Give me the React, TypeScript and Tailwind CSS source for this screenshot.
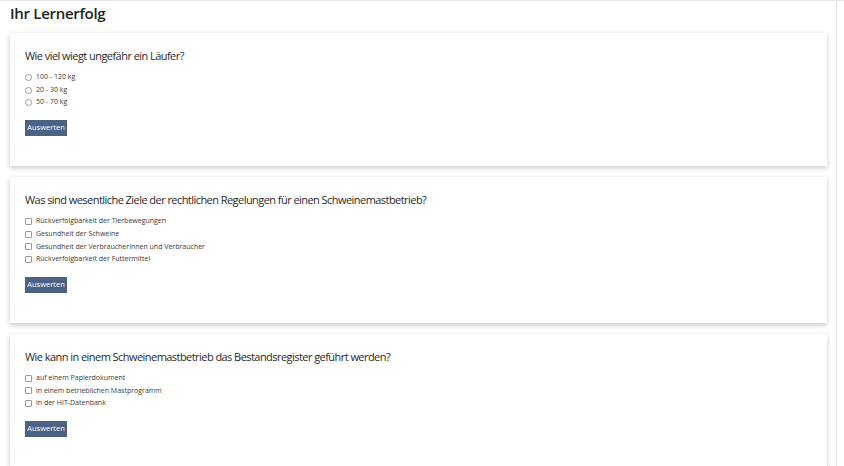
import React from "react";

const font = { fontFamily: '"Open Sans", "Noto Sans", sans-serif' };

function Radio() {
  return <span className="inline-block w-[7px] h-[7px] rounded-full border border-[#9a9a9a] bg-white shrink-0" />;
}
function Check() {
  return <span className="inline-block w-[7px] h-[7px] rounded-[1px] border border-[#9a9a9a] bg-white shrink-0" />;
}

function Card({ q, opts, type }: { q: string; opts: string[]; type: "radio" | "check" }) {
  return (
    <div className="bg-white shadow-[0_2px_5px_rgba(0,0,0,0.22)] px-[15px] pt-[14px] pb-[30px]">
      <div className="text-[11px] leading-[18px] tracking-[-0.55px] text-[#2a2a2a]">{q}</div>
      <div className="mt-[6px] flex flex-col">
        {opts.map((o) => (
          <div key={o} className="flex items-center gap-[4px] h-[12.7px] text-[7px] text-[#3a3a3a]">
            {type === "radio" ? <Radio /> : <Check />}
            <span>{o}</span>
          </div>
        ))}
      </div>
      <button className="mt-[11px] h-[16px] w-[42px] bg-[#4b6286] text-white text-[7.5px] flex items-center justify-center">
        Auswerten
      </button>
    </div>
  );
}

export default function App() {
  return (
    <div style={font} className="w-[844px] h-[466px] overflow-hidden bg-white border-t border-[#e6e6e6] flex">
      <div className="flex-1 pl-[10px] pr-[9px]">
        <h1 className="text-[15px] leading-[20px] tracking-[-0.3px] font-semibold text-[#222] mt-[2px]">Ihr Lernerfolg</h1>
        <div className="mt-[10px] flex flex-col gap-[11px]">
          <Card type="radio" q="Wie viel wiegt ungefähr ein Läufer?" opts={["100 - 120 kg", "20 - 30 kg", "50 - 70 kg"]} />
          <Card
            type="check"
            q="Was sind wesentliche Ziele der rechtlichen Regelungen für einen Schweinemastbetrieb?"
            opts={[
              "Rückverfolgbarkeit der Tierbewegungen",
              "Gesundheit der Schweine",
              "Gesundheit der Verbraucherinnen und Verbraucher",
              "Rückverfolgbarkeit der Futtermittel",
            ]}
          />
          <Card
            type="check"
            q="Wie kann in einem Schweinemastbetrieb das Bestandsregister geführt werden?"
            opts={["auf einem Papierdokument", "in einem betrieblichen Mastprogramm", "in der HIT-Datenbank"]}
          />
        </div>
      </div>
      <div className="w-[8px] border-l border-[#e4e4e4] bg-white" />
    </div>
  );
}
